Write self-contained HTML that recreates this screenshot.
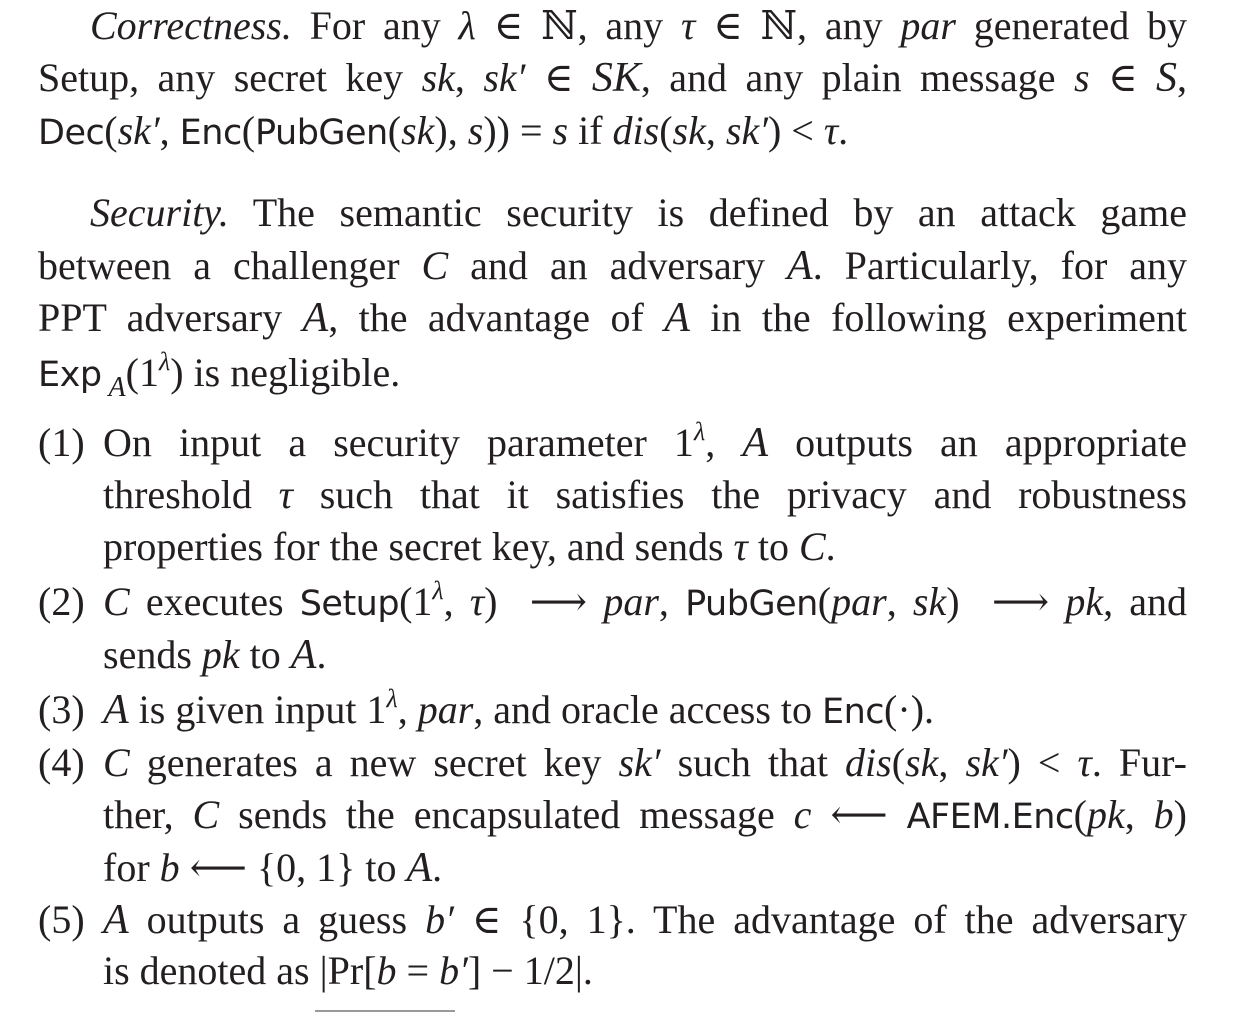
<!DOCTYPE html>
<html><head><meta charset="utf-8"><style>
body{margin:0;width:1250px;height:1013px;background:#fff;overflow:hidden;position:relative;font-family:"Liberation Serif","DejaVu Serif",serif;color:#231f20;}
.l{position:absolute;font-size:40px;line-height:52px;height:52px;white-space:nowrap;}
.j{text-align:justify;text-align-last:justify;white-space:normal;}
i{font-style:italic}
.s{font-family:"DejaVu Sans","Liberation Sans",sans-serif;font-size:35px;letter-spacing:-0.5px}
.c{font-family:"Liberation Serif",serif;font-style:italic;font-size:42px;}
sup{font-size:26px;line-height:0;vertical-align:16px;font-style:italic}
sub{font-size:26px;line-height:0;vertical-align:-10px}
.n{position:absolute;left:38px;font-size:40px;line-height:52px}
</style></head><body>
<div class="l j" style="top:0px;left:90px;width:1097px"><i>Correctness.</i> For any <i>λ</i> ∈ ℕ, any <i>τ</i> ∈ ℕ, any <i>par</i> generated by</div>
<div class="l j" style="top:52px;left:38px;width:1149px">Setup, any secret key <i>sk</i>, <i>sk′</i> ∈ <span class="c">SK</span>, and any plain message <i>s</i> ∈ <span class="c">S</span>,</div>
<div class="l" style="top:105px;left:38px"><span class="s">Dec</span>(<i>sk′</i>, <span class="s">Enc</span>(<span class="s">PubGen</span>(<i>sk</i>), <i>s</i>)) = <i>s</i> if <i>dis</i>(<i>sk</i>, <i>sk′</i>) &lt; <i>τ</i>.</div>

<div class="l j" style="top:187px;left:90px;width:1097px"><i>Security.</i> The semantic security is defined by an attack game</div>
<div class="l j" style="top:240px;left:38px;width:1149px">between a challenger <i>C</i> and an adversary <span class="c">A</span>. Particularly, for any</div>
<div class="l j" style="top:292px;left:38px;width:1149px">PPT adversary <span class="c">A</span>, the advantage of <span class="c">A</span> in the following experiment</div>
<div class="l" style="top:347px;left:38px"><span class="s">Exp</span><sub class="c" style="font-size:28px">&nbsp;A</sub>(1<sup>λ</sup>) is negligible.</div>

<div class="n" style="top:417px">(1)</div>
<div class="l j" style="top:417px;left:103px;width:1084px">On input a security parameter 1<sup>λ</sup>, <span class="c">A</span> outputs an appropriate</div>
<div class="l j" style="top:469px;left:103px;width:1084px">threshold <i>τ</i> such that it satisfies the privacy and robustness</div>
<div class="l" style="top:521px;left:103px">properties for the secret key, and sends <i>τ</i> to <i>C</i>.</div>

<div class="n" style="top:576px">(2)</div>
<div class="l j" style="top:576px;left:103px;width:1084px"><i>C</i> executes <span class="s">Setup</span>(1<sup>λ</sup>, <i>τ</i>) &nbsp;⟶ <i>par</i>, <span class="s">PubGen</span>(<i>par</i>, <i>sk</i>) &nbsp;⟶ <i>pk</i>, and</div>
<div class="l" style="top:629px;left:103px">sends <i>pk</i> to <span class="c">A</span>.</div>

<div class="n" style="top:684px">(3)</div>
<div class="l" style="top:684px;left:103px"><span class="c">A</span> is given input 1<sup>λ</sup>, <i>par</i>, and oracle access to <span class="s">Enc</span>(·).</div>

<div class="n" style="top:737px">(4)</div>
<div class="l j" style="top:737px;left:103px;width:1084px"><i>C</i> generates a new secret key <i>sk′</i> such that <i>dis</i>(<i>sk</i>, <i>sk′</i>) &lt; <i>τ</i>. Fur-</div>
<div class="l j" style="top:789px;left:103px;width:1084px">ther, <i>C</i> sends the encapsulated message <i>c</i> ⟵ <span class="s">AFEM.Enc</span>(<i>pk</i>, <i>b</i>)</div>
<div class="l" style="top:842px;left:103px">for <i>b</i> ⟵ {0, 1} to <span class="c">A</span>.</div>

<div class="n" style="top:894px">(5)</div>
<div class="l j" style="top:894px;left:103px;width:1084px"><span class="c">A</span> outputs a guess <i>b′</i> ∈ {0, 1}. The advantage of the adversary</div>
<div class="l" style="top:945px;left:103px">is denoted as |Pr[<i>b</i> = <i>b′</i>] − 1/2|.</div>
<div style="position:absolute;top:1010px;left:315px;width:140px;height:2px;background:#999"></div>
</body></html>
